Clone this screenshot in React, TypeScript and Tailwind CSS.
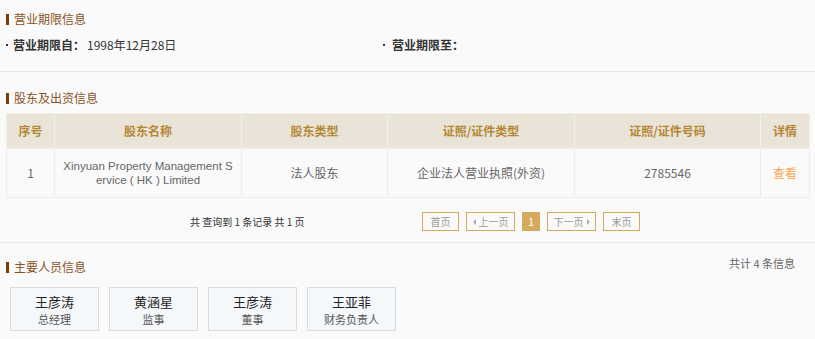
const font = '"Noto Sans CJK SC", "Liberation Sans", sans-serif';

const columns = [
  { label: '序号', width: 'w-[48px]' },
  { label: '股东名称', width: 'w-[187px]' },
  { label: '股东类型', width: 'w-[146px]' },
  { label: '证照/证件类型', width: 'w-[187px]' },
  { label: '证照/证件号码', width: 'w-[186px]' },
  { label: '详情', width: 'w-[49px]' },
];

const people = [
  { name: '王彦涛', role: '总经理' },
  { name: '黄涵星', role: '监事' },
  { name: '王彦涛', role: '董事' },
  { name: '王亚菲', role: '财务负责人' },
];

function SectionTitle({ children }: { children: React.ReactNode }) {
  return (
    <div className="flex h-[12px] items-center gap-[5px]">
      <span className="h-[11px] w-[3px] bg-[#7a3d06]" />
      <span className="text-[12px] leading-[12px] text-[#8a5326]">{children}</span>
    </div>
  );
}

function PageButton({
  children,
  active,
  width,
}: {
  children: React.ReactNode;
  active?: boolean;
  width: string;
}) {
  return (
    <span
      className={
        active
          ? `flex h-[19px] ${width} items-center justify-center bg-[#d4aa5c] text-[11px] text-white`
          : `flex h-[19px] ${width} items-center justify-center gap-[3px] border border-[#d4aa5c] text-[10px] text-[#999]`
      }
    >
      {children}
    </span>
  );
}

export default function App() {
  return (
    <div className="min-h-[339px] w-[815px] bg-[#fafafa] text-[12px] text-[#333]" style={{ fontFamily: font }}>
      {/* 营业期限 */}
      <section className="border-b border-[#e8e8e8] px-[6px] pt-[13px] pb-[16px]">
        <SectionTitle>营业期限信息</SectionTitle>
        <div className="mt-[10px] flex h-[20px] items-center">
          <div className="flex w-[377px] items-center">
            <span className="mr-[5px] h-[2px] w-[2px] bg-[#333]" />
            <span className="font-bold">营业期限自：</span>
            <span className="ml-[2px]">1998年12月28日</span>
          </div>
          <div className="flex items-center">
            <span className="mr-[7px] h-[2px] w-[2px] bg-[#333]" />
            <span className="font-bold">营业期限至：</span>
          </div>
        </div>
      </section>

      {/* 股东及出资 */}
      <section className="border-b border-[#e8e8e8] px-[6px] pt-[20px]">
        <SectionTitle>股东及出资信息</SectionTitle>
        <table className="mt-[9px] w-[803px] table-fixed border-collapse">
          <colgroup>
            {columns.map((c) => (
              <col key={c.label} className={c.width} />
            ))}
          </colgroup>
          <thead>
            <tr className="h-[35px] bg-[#e9e3d8]">
              {columns.map((c) => (
                <th
                  key={c.label}
                  className="border border-[#f3f0ea] text-center text-[12px] font-bold text-[#b48733]"
                >
                  {c.label}
                </th>
              ))}
            </tr>
          </thead>
          <tbody>
            <tr className="h-[49px] text-[#666]">
              <td className="border border-[#ececec] text-center">1</td>
              <td className="border border-[#ececec] text-center font-['Liberation_Sans',sans-serif] text-[11.5px] leading-[14px] whitespace-nowrap">
                Xinyuan Property Management S
                <br />
                ervice ( HK ) Limited
              </td>
              <td className="border border-[#ececec] text-center">法人股东</td>
              <td className="border border-[#ececec] text-center">企业法人营业执照(外资)</td>
              <td className="border border-[#ececec] text-center">2785546</td>
              <td className="border border-[#ececec] text-center text-[#ffa54f]">查看</td>
            </tr>
          </tbody>
        </table>
        <div className="flex items-center pt-[14px] pb-[11px]">
          <div className="ml-[184px] w-[232px] text-[10px] text-[#333]">共 查询到 1 条记录 共 1 页</div>
          <div className="flex items-center gap-[7px]">
            <PageButton width="w-[37px]">首页</PageButton>
            <PageButton width="w-[49px]">
              <span className="h-0 w-0 border-y-[3px] border-r-[3px] border-y-transparent border-r-[#aaa]" />
              上一页
            </PageButton>
            <PageButton width="w-[18px]" active>
              1
            </PageButton>
            <PageButton width="w-[49px]">
              下一页
              <span className="h-0 w-0 border-y-[3px] border-l-[3px] border-y-transparent border-l-[#aaa]" />
            </PageButton>
            <PageButton width="w-[37px]">末页</PageButton>
          </div>
        </div>
      </section>

      {/* 主要人员 */}
      <section className="px-[6px] pt-[18px]">
        <div className="flex items-start justify-between">
          <SectionTitle>主要人员信息</SectionTitle>
          <span className="mr-[14px] -mt-[6px] text-[11px] text-[#666]">共计 4 条信息</span>
        </div>
        <div className="mt-[14px] ml-[4px] flex gap-[10px]">
          {people.map((p, i) => (
            <div
              key={i}
              className="flex h-[44px] w-[89px] flex-col items-center border border-[#dcdcdc] bg-[#f5f8fa] pt-[5px]"
            >
              <span className="text-[13px] leading-[18px] text-[#222]">{p.name}</span>
              <span className="text-[11px] leading-[16px] text-[#555]">{p.role}</span>
            </div>
          ))}
        </div>
      </section>
    </div>
  );
}
